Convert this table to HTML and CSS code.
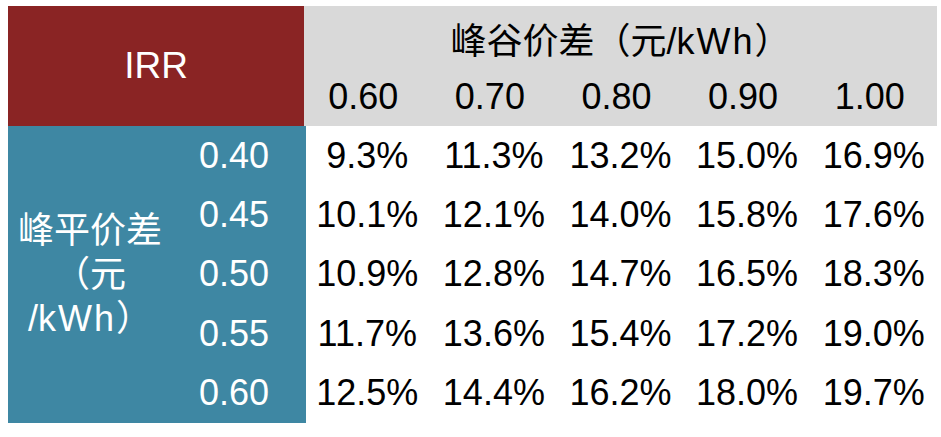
FILE: index.html
```html
<!DOCTYPE html>
<html lang="zh">
<head>
<meta charset="utf-8">
<title>IRR</title>
<link rel="stylesheet" href="styles.css">
</head>
<body>
<div class="wrap">
  <div class="sheet">
    <div class="irr">IRR</div>
    <div class="title"><div>峰谷价差（元/<span class="unit">kWh</span>）</div></div>
    <div class="hnum">0.60</div>
    <div class="hnum">0.70</div>
    <div class="hnum">0.80</div>
    <div class="hnum">0.90</div>
    <div class="hnum">1.00</div>

    <div class="side">
      <div class="side-label"><div>峰平价差<br>（元<br>/<span class="unit">kWh</span>）</div></div>
      <div class="rnum">0.40</div>
      <div class="rnum">0.45</div>
      <div class="rnum">0.50</div>
      <div class="rnum">0.55</div>
      <div class="rnum">0.60</div>
    </div>

    <div class="cell">9.3%</div><div class="cell">11.3%</div><div class="cell">13.2%</div><div class="cell">15.0%</div><div class="cell">16.9%</div>
    <div class="cell">10.1%</div><div class="cell">12.1%</div><div class="cell">14.0%</div><div class="cell">15.8%</div><div class="cell">17.6%</div>
    <div class="cell">10.9%</div><div class="cell">12.8%</div><div class="cell">14.7%</div><div class="cell">16.5%</div><div class="cell">18.3%</div>
    <div class="cell">11.7%</div><div class="cell">13.6%</div><div class="cell">15.4%</div><div class="cell">17.2%</div><div class="cell">19.0%</div>
    <div class="cell">12.5%</div><div class="cell">14.4%</div><div class="cell">16.2%</div><div class="cell">18.0%</div><div class="cell">19.7%</div>
  </div>
</div>
</body>
</html>
```
FILE: styles.css
```css
html, body {
  margin: 0;
  background: #ffffff;
}
.wrap {
  padding: 6px 0 0 8px;
}
.sheet {
  display: grid;
  grid-template-columns: 296px repeat(5, 126.6px);
  grid-template-rows: 62px 58px repeat(5, 59.4px);
  font-family: "Liberation Sans", "Noto Sans CJK SC", sans-serif;
  font-size: 36px;
  color: #000;
}
.unit {
  letter-spacing: 2px;
}
.irr {
  grid-column: 1;
  grid-row: 1 / 3;
  background: #8a2424;
  color: #fff;
  display: flex;
  align-items: center;
  justify-content: center;
  font-size: 37px;
}
.title {
  grid-column: 2 / 7;
  grid-row: 1;
  background: #d9d9d9;
  display: flex;
  align-items: center;
  justify-content: center;
  padding-top: 2px;
}
.hnum {
  grid-row: 2;
  background: #d9d9d9;
  display: flex;
  align-items: center;
  justify-content: center;
  padding-right: 8px;
}
.side {
  grid-column: 1;
  grid-row: 3 / 8;
  margin-right: -2px;
  background: #3e87a3;
  color: #fff;
  display: grid;
  grid-template-columns: 164px 1fr;
  grid-template-rows: repeat(5, 1fr);
  position: relative;
  z-index: 1;
}
.side-label {
  grid-column: 1;
  grid-row: 1 / 6;
  display: flex;
  align-items: center;
  justify-content: center;
  text-align: center;
  line-height: 44px;
  padding-top: 2px;
  white-space: nowrap;
}
.rnum {
  grid-column: 2;
  display: flex;
  align-items: center;
  justify-content: center;
  padding-right: 10px;
}
.cell {
  display: flex;
  align-items: center;
  justify-content: center;
}
```
